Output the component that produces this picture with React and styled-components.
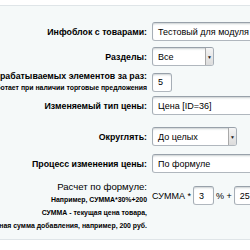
import React from "react";
import styled, { createGlobalStyle } from "styled-components";

const GlobalStyle = createGlobalStyle`
  html, body {
    margin: 0;
    padding: 0;
    background: #fff;
    overflow: hidden;
  }
  body {
    font-family: "Liberation Sans", Arial, sans-serif;
  }
`;

const Page = styled.div`
  width: 250px;
  height: 250px;
  padding-top: 5px;
  box-sizing: border-box;
  overflow: hidden;
`;

const Panel = styled.div`
  height: 235px;
  box-sizing: border-box;
  background: #f5f9f9;
  border-top: 1px solid #dfe5e8;
  border-bottom: 1px solid #dfe5e8;
  padding-top: 16px;
`;

const Row = styled.div`
  display: flex;
  align-items: ${(p) => (p.$top ? "flex-start" : "center")};
  gap: 5px;
  margin-top: ${(p) => p.$mt || 0}px;
  min-height: 19px;
`;

const LabelCell = styled.div`
  width: 147px;
  flex: none;
  display: flex;
  flex-direction: column;
  align-items: flex-end;
  justify-content: center;
`;

const Label = styled.div`
  white-space: nowrap;
  font-size: ${(p) => (p.$big ? "9.6px" : "8.8px")};
  font-weight: ${(p) => (p.$big ? "normal" : "bold")};
  color: #000;
  line-height: ${(p) => (p.$big ? "13px" : "12px")};
`;

const Hint = styled.div`
  white-space: nowrap;
  font-size: 6.9px;
  font-weight: bold;
  color: #000;
  line-height: ${(p) => p.$lh || 13}px;
`;

const Field = styled.div`
  flex: none;
  box-sizing: border-box;
  width: ${(p) => p.$w}px;
  height: 19px;
  background: #fff;
  border: 1px solid;
  border-color: #98a1aa #a6aeb6 #b0b7be;
  border-radius: 3px;
  box-shadow: inset 0 2px 2px -1px rgba(180, 188, 191, 0.7);
  display: flex;
  align-items: center;
  padding-left: 5px;
  font-size: 9px;
  color: #000;
  white-space: nowrap;
  overflow: hidden;
`;

const SelectBox = styled(Field)`
  padding-right: 0;
  justify-content: space-between;
`;

const Arrow = styled.div`
  width: 8px;
  height: 17px;
  box-sizing: border-box;
  background: linear-gradient(#f4f4f4, #dcdcdc);
  border-left: 1px solid #a9a9a9;
  display: flex;
  align-items: center;
  justify-content: center;
  font-size: 5px;
  color: #222;
`;

const Formula = styled.div`
  display: flex;
  align-items: center;
  gap: 2px;
  margin-top: 6px;
  font-size: 9px;
  color: #000;
  white-space: nowrap;
`;

const Caret = styled.span`
  display: inline-block;
  width: 1px;
  height: 11px;
  background: #000;
  margin-left: 1px;
`;

export default function App() {
  return (
    <Page>
      <GlobalStyle />
      <Panel>
        <Row>
          <LabelCell>
            <Label>Инфоблок с товарами:</Label>
          </LabelCell>
          <Field $w={130}>Тестовый для модуля [ID=2]</Field>
        </Row>
        <Row $mt={6}>
          <LabelCell>
            <Label>Разделы:</Label>
          </LabelCell>
          <SelectBox $w={62}>
            Все
            <Arrow>▼</Arrow>
          </SelectBox>
        </Row>
        <Row $mt={4}>
          <LabelCell>
            <Label>Количество обрабатываемых элементов за раз:</Label>
            <Hint $lh={12}>Не работает при наличии торговые предложения</Hint>
          </LabelCell>
          <Field $w={20}>5</Field>
        </Row>
        <Row $mt={2}>
          <LabelCell>
            <Label>Изменяемый тип цены:</Label>
          </LabelCell>
          <Field $w={130}>Цена [ID=36]</Field>
        </Row>
        <Row $mt={12}>
          <LabelCell>
            <Label>Округлять:</Label>
          </LabelCell>
          <SelectBox $w={85}>
            До целых
            <Arrow>▼</Arrow>
          </SelectBox>
        </Row>
        <Row $mt={8}>
          <LabelCell>
            <Label>Процесс изменения цены:</Label>
          </LabelCell>
          <Field $w={130}>По формуле</Field>
        </Row>
        <Row $mt={7} $top>
          <LabelCell>
            <Label $big>Расчет по формуле:</Label>
            <Hint>Например, СУММА*30%+200</Hint>
            <Hint>СУММА - текущая цена товара,</Hint>
            <Hint>200 - фиксированная сумма добавления, например, 200 руб.</Hint>
          </LabelCell>
          <Formula>
            СУММА *
            <Field $w={21}>3</Field>
            % +
            <Field $w={30}>
              25
              <Caret />
            </Field>
          </Formula>
        </Row>
      </Panel>
    </Page>
  );
}
